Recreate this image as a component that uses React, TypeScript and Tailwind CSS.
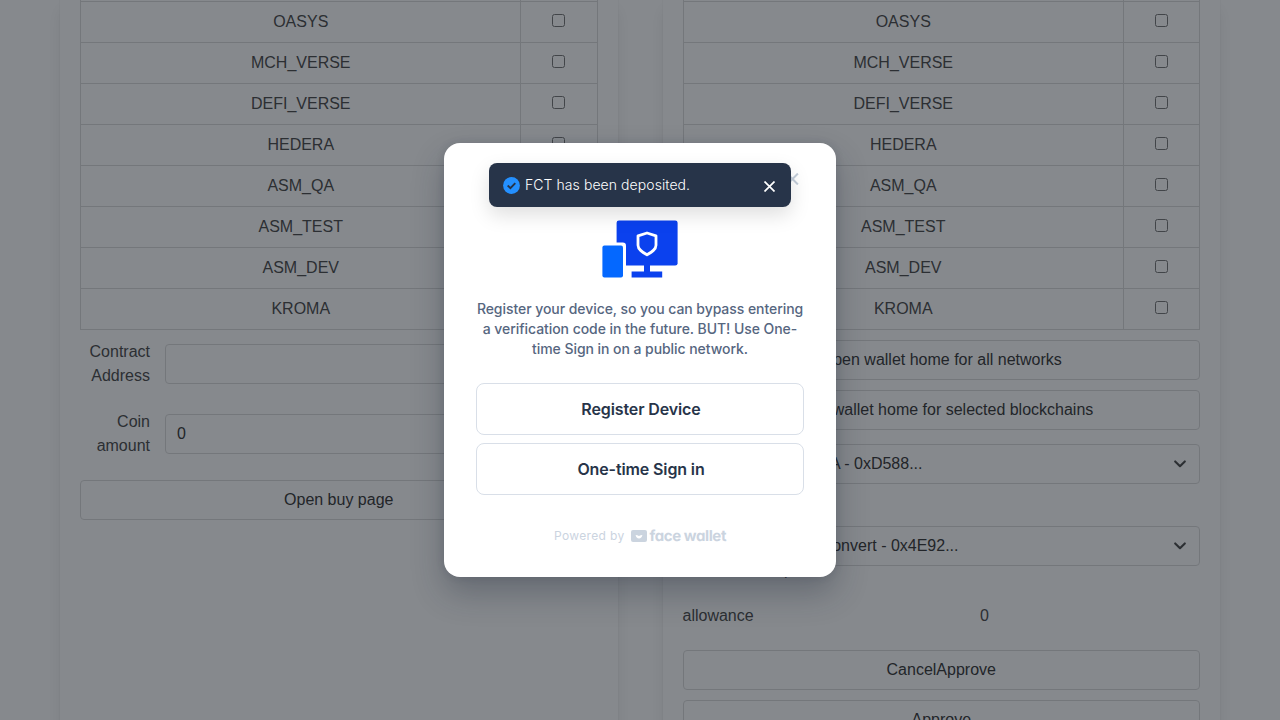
import React from 'react';

const networks = ['OASYS', 'MCH_VERSE', 'DEFI_VERSE', 'HEDERA', 'ASM_QA', 'ASM_TEST', 'ASM_DEV', 'KROMA'];

function NetworkTable() {
  return (
    <div className="border-x border-[#dbdbdb] text-[#4a4a4a]">
      <div className="flex h-[2px] border-b border-[#dbdbdb]">
        <div className="flex-1 border-r border-[#dbdbdb]" />
        <div className="w-[75.5px]" />
      </div>
      {networks.map((name) => (
        <div key={name} className="flex h-[41px] border-b border-[#dbdbdb]">
          <div className="flex-1 border-r border-[#dbdbdb] pt-2 pl-[0.5px] text-center">{name}</div>
          <div className="flex w-[75.5px] justify-center pt-[12px]">
            <input type="checkbox" className="m-0 size-[13px]" />
          </div>
        </div>
      ))}
    </div>
  );
}

function Button({ children }: { children: React.ReactNode }) {
  return (
    <button className="block h-10 w-full shrink-0 rounded-[4px] border border-[#dbdbdb] bg-white text-center text-[#363636]">
      {children}
    </button>
  );
}

function Field({ label, value }: { label: string; value: string }) {
  return (
    <div className="flex h-12 items-center">
      <div className="mr-[15px] w-[70px] text-right text-[#4a4a4a]">{label}</div>
      <input
        className="h-10 min-w-0 flex-1 rounded-[4px] border border-[#dbdbdb] bg-white px-[11px] text-[#363636]"
        defaultValue={value}
      />
    </div>
  );
}

function Select({ label, width }: { label: string; width: string }) {
  return (
    <div className="flex h-10 items-center justify-between rounded-[4px] border border-[#dbdbdb] pr-[13px] text-[#363636]">
      <span className={`${width} text-right`}>{label}</span>
      <svg width="12" height="8" viewBox="0 0 12 8" fill="none" stroke="#4a4a4a" strokeWidth="2.1" strokeLinecap="round" strokeLinejoin="round">
        <path d="M1.200 1.400 6 6.200l4.800-4.800" />
      </svg>
    </div>
  );
}

const panel =
  'h-[900px] min-w-0 flex-1 bg-white px-5 shadow-[0_8px_16px_-2px_rgba(10,10,10,0.1),0_0_0_1px_rgba(10,10,10,0.02)]';

function DeviceIcon() {
  return (
    <svg width="76" height="58" viewBox="0 0 76 58" fill="none">
      <rect x="14.6" y="0.4" width="61" height="45.2" rx="2.4" fill="#0b41ee" />
      <path d="M42 45h6v6.600h12.200v6H29.600v-6H42z" fill="#0b41ee" />
      <path d="M0 22.500h20.800a3.200 3.200 0 0 1 3.200 3.200V58H0z" fill="#fff" />
      <rect x="0.4" y="25.4" width="20.6" height="32.2" rx="2" fill="#0468ff" />
      <path d="M45 13 54 15.800v9.400c0 4.400-4.600 7.100-9 9.600-4.400-2.500-9-5.200-9-9.600v-9.400z" stroke="#fff" strokeWidth="2.8" strokeLinejoin="round" />
    </svg>
  );
}

export default function App() {
  return (
    <div className="relative h-[720px] w-[1280px] overflow-hidden bg-white font-['Liberation_Sans',sans-serif] text-base leading-6">
      <div className="flex gap-[45px] px-[60px]">
        <section className={panel}>
          <NetworkTable />
          <div className="mt-[10px] flex flex-col gap-[22px]">
            <Field label="Contract Address" value="" />
            <Field label="Coin amount" value="0" />
            <Button>Open buy page</Button>
          </div>
        </section>
        <section className={panel}>
          <NetworkTable />
          <div className="mt-[10px] flex flex-col gap-[10px]">
            <Button>Open wallet home for all networks</Button>
            <Button>Open wallet home for selected blockchains</Button>
          </div>
          <div className="mt-[14px]">
            <Select label="LUNA - 0xD588..." width="w-[239px]" />
          </div>
          <div className="mt-[42px]">
            <Select label="Convert - 0x4E92..." width="w-[275px]" />
          </div>
          <div className="-mt-[8px] text-[#4a4a4a]">Address can spend</div>
          <div className="mt-[22px] flex text-[#4a4a4a]">
            <span className="w-[297.5px]">allowance</span>
            <span>0</span>
          </div>
          <div className="mt-[22px] flex flex-col gap-[10px]">
            <Button>CancelApprove</Button>
            <Button>Approve</Button>
          </div>
        </section>
      </div>

      <div className="absolute inset-0 flex items-center justify-center bg-[#0d131b]/50">
        <div className="relative flex h-[434px] w-[392px] flex-col items-center rounded-2xl bg-white px-8 font-['Inter',sans-serif] shadow-[0_16px_32px_rgba(28,37,54,0.3),0_0_8px_rgba(28,37,54,0.12)]">
          <div className="mt-[77px]">
            <DeviceIcon />
          </div>
          <p className="mt-[21px] w-[332px] text-center text-sm font-[450] leading-5 tracking-[-0.06px] text-[#56667f]">
            Register your device, so you can bypass entering a verification code in the future. BUT! Use One-time Sign in on a public network.
          </p>
          <div className="mt-6 flex w-full flex-col gap-2 text-base font-semibold tracking-[-0.12px] text-[#273449]">
            <button className="h-[52px] rounded-lg border border-[#d9dfe8] pl-[2px]">Register Device</button>
            <button className="h-[52px] rounded-lg border border-[#d9dfe8] pl-[2px]">One-time Sign in</button>
          </div>
          <div className="mt-[33px] flex h-4 w-[172px] items-center text-[#cbd4df]">
            <span className="w-[78px] whitespace-nowrap text-xs tracking-[0.35px]">Powered by</span>
            <svg width="16" height="12" viewBox="0 0 16 12" className="ml-px shrink-0">
              <rect width="16" height="12" rx="2" fill="#cbd4df" />
              <path d="M4.600 5q1.700.1 3.400 1.100Q9.700 5.100 11.400 5 10.800 8.400 8 8.400 5.200 8.400 4.600 5z" fill="#fff" />
            </svg>
            <span className="ml-[2px] whitespace-nowrap text-[15px] font-bold leading-4 tracking-[-0.4px] [font-feature-settings:'cv11'] [text-rendering:geometricPrecision]">face wallet</span>
          </div>

          <svg className="absolute left-[342px] top-[30px]" width="13" height="12" viewBox="0 0 13 12" stroke="#c3cdd9" strokeWidth="2.1">
            <path d="m1.100.6 10.800 10.800M11.900.6 1.100 11.400" />
          </svg>

          <div className="absolute left-[45px] top-5 flex h-11 w-[302px] items-center rounded-lg bg-[#273449] pl-[13.5px] pr-[16.5px] text-white shadow-[0_8px_20px_rgba(0,0,0,0.13)]">
            <svg width="17" height="17" viewBox="0 0 17 17" fill="none">
              <circle cx="8.500" cy="8.500" r="8.400" fill="#2490ff" />
              <path d="m4.700 8.500 2.700 2.600 4.900-4.900" stroke="#273449" strokeWidth="1.900" />
            </svg>
            <span className="ml-[5.5px] flex-1 text-sm font-[350] leading-5 tracking-[0.07px]">FCT has been deposited.</span>
            <svg className="mt-[2px]" width="11" height="11" viewBox="0 0 11 11" stroke="#fff" strokeWidth="1.700">
              <path d="m.5.5 10 10M10.500.5.5 10.500" />
            </svg>
          </div>
        </div>
      </div>
    </div>
  );
}
